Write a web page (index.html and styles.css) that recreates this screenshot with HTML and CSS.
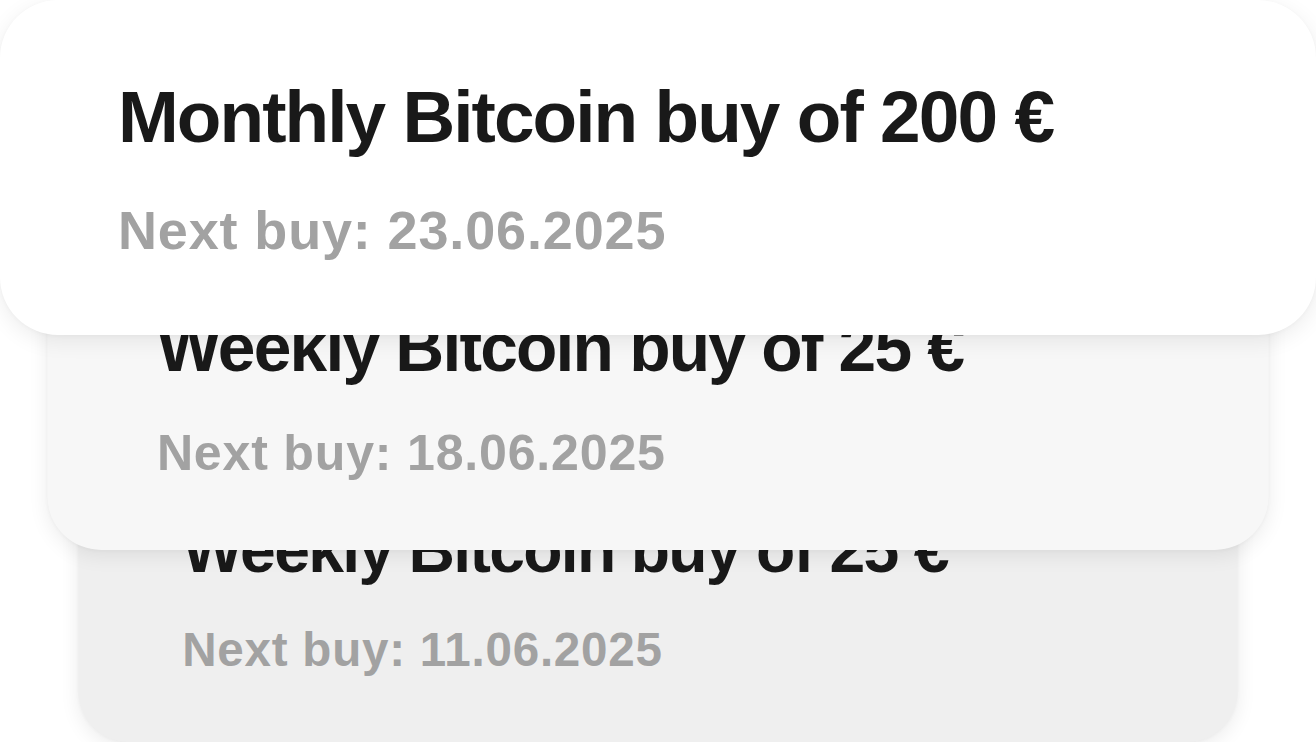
FILE: index.html
```html
<!DOCTYPE html>
<html lang="en">
<head>
<meta charset="utf-8">
<title>Recurring buys</title>
<link rel="stylesheet" href="styles.css">
</head>
<body>
  <main class="stack">
    <article class="plan plan--front">
      <h2 class="plan__title">Monthly Bitcoin buy of 200 €</h2>
      <p class="plan__next">Next buy: 23.06.2025</p>
    </article>
    <article class="plan plan--middle">
      <h2 class="plan__title">Weekly Bitcoin buy of 25 €</h2>
      <p class="plan__next">Next buy: 18.06.2025</p>
    </article>
    <article class="plan plan--back">
      <h2 class="plan__title">Weekly Bitcoin buy of 25 €</h2>
      <p class="plan__next">Next buy: 11.06.2025</p>
    </article>
  </main>
</body>
</html>
```
FILE: styles.css
```css
html, body {
  margin: 0;
  padding: 0;
  background: #ffffff;
  overflow: hidden;
}

body {
  width: 1316px;
  height: 742px;
  font-family: "Liberation Sans", Arial, Helvetica, sans-serif;
}

/* all cards share one grid cell and fan out downward */
.stack {
  display: grid;
  width: 1316px;
}

.plan {
  grid-area: 1 / 1;
  box-sizing: border-box;
  height: 335px;
  padding: 80px 0 0 118px;
  display: flex;
  flex-direction: column;
  gap: 50px;
  border-radius: 58px;
  transform-origin: center center;
  box-shadow: 0 6px 22px rgba(0, 0, 0, 0.075), 0 1px 4px rgba(0, 0, 0, 0.03);
}

.plan--front {
  z-index: 3;
  background: #ffffff;
}

.plan--middle {
  z-index: 2;
  background: #f7f7f7;
  transform: translateY(227px) scale(0.928);
}

.plan--back {
  z-index: 1;
  background: #efefef;
  transform: translateY(427px) scale(0.881);
}

.plan__title {
  margin: 0;
  font-size: 73px;
  line-height: 73px;
  font-weight: 700;
  letter-spacing: -1.95px;
  color: #191919;
  white-space: nowrap;
}

.plan__next {
  margin: 0;
  font-size: 54px;
  line-height: 54px;
  font-weight: 700;
  letter-spacing: 0.85px;
  color: #a2a2a2;
  white-space: nowrap;
}
```
